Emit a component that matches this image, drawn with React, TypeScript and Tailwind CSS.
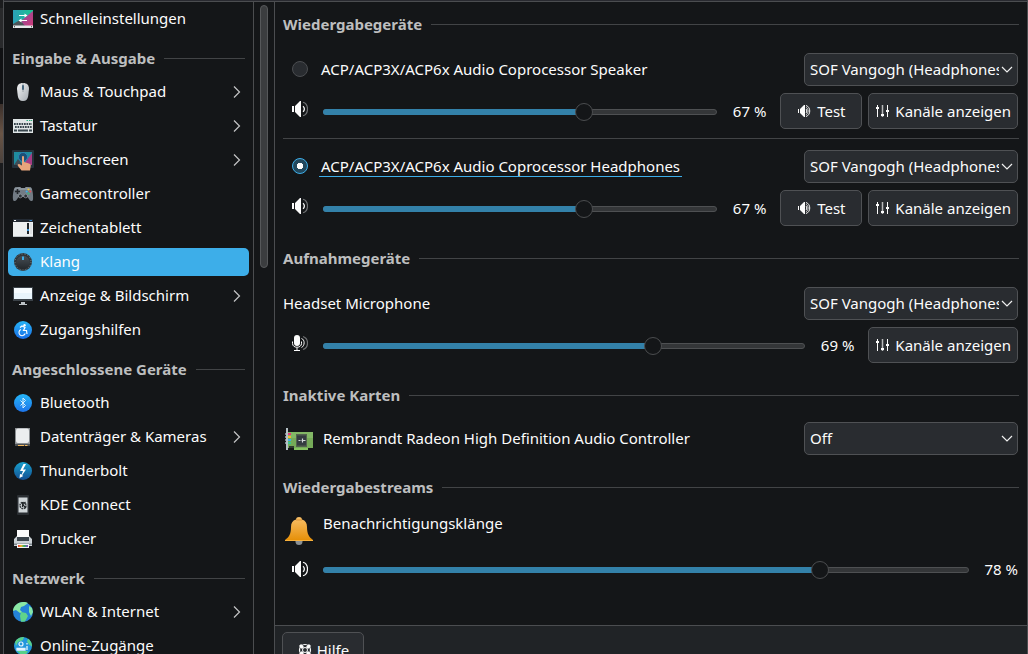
import { useState, type ReactNode } from 'react';

interface NavItem {
  label: string;
  icon: ReactNode;
  more?: boolean;
}

interface NavGroup {
  title?: string;
  items: NavItem[];
}

const Svg = ({ children }: { children: ReactNode }) => (
  <svg viewBox="0 0 22 22" className="size-[22px] shrink-0" aria-hidden="true">
    {children}
  </svg>
);

const QuickIcon = () => (
  <Svg>
    <defs>
      <linearGradient id="quick" x1="0" y1="0" x2="1" y2="0">
        <stop offset="0" stopColor="#2aa0b8" />
        <stop offset="1" stopColor="#1cc28f" />
      </linearGradient>
      <linearGradient id="quick-pink" x1="0" y1="0" x2="1" y2="1">
        <stop offset="0" stopColor="#8a4fa0" />
        <stop offset="1" stopColor="#cf3a78" />
      </linearGradient>
    </defs>
    <path d="M1 2h20v16H1z" fill="url(#quick)" />
    <path d="M21 3v15H12l-3-5z" fill="url(#quick-pink)" />
    <path d="M1 18v-2l7-4 5 6z" fill="#4b5357" />
    <path d="M1 17.500h20V20H1z" fill="#e6e9ea" />
    <path d="M2 18.300h1v1H2zM19 18.300h1v1h-1z" fill="#333" />
    <path d="M7 7.500h7M8 12.500h7" stroke="#fff" strokeWidth="1.200" />
    <path d="M12.500 5.500 15.500 7.500l-3 2zM9.500 10.500l-3 2 3 2z" fill="#fff" />
  </Svg>
);

const MouseIcon = () => (
  <Svg>
    <defs>
      <linearGradient id="mouse" x1="0" y1="0" x2="1" y2="1">
        <stop offset="0" stopColor="#f4f5f6" />
        <stop offset="1" stopColor="#a5abb1" />
      </linearGradient>
    </defs>
    <path d="M5 8c0-4 2-6 6-6s6 2 6 6l-.8 7c-.4 3-2 5-5.200 5s-4.800-2-5.200-5z" fill="url(#mouse)" />
    <path d="M11 2v9" stroke="#8c949b" strokeWidth=".8" />
    <rect x="10" y="4" width="2" height="5" rx="1" fill="#45657c" />
  </Svg>
);

const KeyboardIcon = () => (
  <Svg>
    <path d="M1 4h20v14H1z" fill="#dfe5e6" />
    <path d="M14.500 5h1.500v1h-1.500zM17 5h1.500v1H17zM19 5h1.200v1H19z" fill="#2fae7d" />
    <path d="M2 9h18M3 12h17" stroke="#39464d" strokeWidth="2" strokeDasharray="1.700 .8" />
    <path d="M2 15.500h3m1 0h10m1 0h3" stroke="#39464d" strokeWidth="1.800" />
  </Svg>
);

const TouchIcon = () => (
  <Svg>
    <rect x="0" y="1" width="22" height="18" rx="1" fill="#26323c" />
    <path d="M2 3h18v13H2z" fill="#1f8ca0" />
    <path d="M20 4v12h-9z" fill="#a53c84" />
    <path d="M2 16h9l-5-6z" fill="#404d56" />
    <circle cx="11" cy="8" r="4.500" fill="#1b4f78" stroke="#2b83b4" />
    <path d="M10 8c0-1.500 2-1.500 2 0v5l5 1.500c1.500.5 2 1.500 1.700 2.800L18 21.500H9.500L6 17c-1-1.500.5-2.500 2-1.500l2 1z" fill="#e8a57c" />
  </Svg>
);

const GamepadIcon = () => (
  <Svg>
    <path d="M3 4.500 8 4l1 1h4l1-1 5 .5c1.500 1 2.500 8 2 12-.3 2-2.500 2-3.500.5L15.500 14h-9L4.500 17c-1 1.500-3.200 1.500-3.500-.5-.5-4 .5-11 2-12z" fill="#727b84" />
    <path d="M3 4.500 8 4l1 1h4l1-1 5 .5 1 2.500H2z" fill="#8b949c" />
    <path d="M5.500 6v5M3 8.500h5" stroke="#23272b" strokeWidth="1.600" />
    <circle cx="16.500" cy="6.500" r="1.100" fill="#e6c13c" />
    <circle cx="14.700" cy="8.500" r="1.100" fill="#3daee9" />
    <circle cx="18.300" cy="8.500" r="1.100" fill="#e0555f" />
    <circle cx="16.500" cy="10.500" r="1.100" fill="#3cb878" />
    <circle cx="8.300" cy="13" r="1.900" fill="#2e3439" stroke="#a6adb2" strokeWidth=".6" />
    <circle cx="13.700" cy="13" r="1.900" fill="#2e3439" stroke="#a6adb2" strokeWidth=".6" />
  </Svg>
);

const TabletIcon = () => (
  <Svg>
    <path d="M1 4h20v16H1z" fill="#eceff0" />
    <path d="M1 2h20v3H1z" fill="#232a33" />
    <path d="M2 3h2v1H2z" fill="#fff" />
    <path d="M17.500 3h2.500v1h-2.500z" fill="#2f83c9" />
    <path d="M1 19h20v1H1z" fill="#bfc5c8" />
    <path d="M15 6h2v11h-2z" fill="#20262b" />
    <path d="M15 12h2v2h-2z" fill="#3992d6" />
    <path d="M18.500 6h1v11h-1z" fill="#cfd4d6" />
  </Svg>
);

const SoundIcon = () => (
  <Svg>
    <defs>
      <linearGradient id="knob" x1="0" y1="0" x2="0" y2="1">
        <stop offset="0" stopColor="#474f56" />
        <stop offset="1" stopColor="#23282c" />
      </linearGradient>
    </defs>
    <circle cx="11" cy="11" r="9" fill="#2e353a" />
    <circle cx="11" cy="11" r="8" fill="none" stroke="#7b858c" strokeDasharray="1 2" />
    <circle cx="11" cy="11.500" r="6.800" fill="url(#knob)" />
    <path d="M10 5.500h2V9h-2z" fill="#3daee9" />
  </Svg>
);

const DisplayIcon = () => (
  <Svg>
    <path d="M1 2h20v14H1z" fill="#3b4248" />
    <path d="M2 3h18v11H2z" fill="#e9f4fb" />
    <path d="M2 3h18v5H2z" fill="#f6fbfe" />
    <path d="M9 17h4v2H9zM7 19h8v1H7z" fill="#bdc3c7" />
  </Svg>
);

// Round badge shared by a couple of the sidebar icons
const BadgeIcon = ({ id, from, to, children }: { id: string; from: string; to: string; children: ReactNode }) => (
  <Svg>
    <defs>
      <linearGradient id={id} x1="0" y1="0" x2="0" y2="1">
        <stop offset="0" stopColor={from} />
        <stop offset="1" stopColor={to} />
      </linearGradient>
    </defs>
    <circle cx="11" cy="11" r="9" fill={`url(#${id})`} />
    {children}
  </Svg>
);

const AccessIcon = () => (
  <BadgeIcon id="access" from="#27b4f5" to="#1a6fe8">
    <circle cx="12.500" cy="6.300" r="1.200" fill="#fff" />
    <path d="M8 8.500 10 7l3 1.500-1.500 3h3L15 15" fill="none" stroke="#fff" strokeWidth="1.200" />
    <path d="M9 10.500a3.200 3.200 0 1 0 4.200 4" fill="none" stroke="#fff" strokeWidth="1.100" />
  </BadgeIcon>
);

const BluetoothIcon = () => (
  <BadgeIcon id="bt" from="#25b6f8" to="#1d74ea">
    <path d="m8.500 8.500 5 5-2.500 2.500V6l2.500 2.500-5 5" fill="none" stroke="#d8eefc" />
  </BadgeIcon>
);

const ThunderboltIcon = () => (
  <BadgeIcon id="tb" from="#18a0cc" to="#134f93">
    <path d="M11.500 4 8 11h3l-1.300 3.500L8 14l-.5 4 3.800-2-1.200-.8L14 9.500h-3L14 4z" fill="#fff" />
  </BadgeIcon>
);

const DriveIcon = () => (
  <Svg>
    <path d="M3 2h15v18H3z" fill="#8b8f92" />
    <rect x="4" y="2.500" width="13" height="14.500" rx="2" fill="#eceeef" />
    <path d="M3 18h15v2H3z" fill="#4c5053" />
    <path d="M6 19.500h6M13 19.500h2.500" stroke="#f5b95d" />
  </Svg>
);

const ConnectIcon = () => (
  <Svg>
    <rect x="5" y="1" width="12" height="20" rx="1" fill="#2a2e32" />
    <path d="M6.500 3.500h9v15h-9z" fill="#cfd5d8" />
    <circle cx="11" cy="11.500" r="3" fill="none" stroke="#33383c" strokeWidth="1.500" strokeDasharray="1.600 .7" />
    <path d="M10.500 8v5m0-2 3-3m-2.500 3 3 3" stroke="#22272a" strokeWidth="1.100" />
  </Svg>
);

const PrinterIcon = () => (
  <Svg>
    <defs>
      <linearGradient id="ink" x1="0" y1="0" x2="1" y2="0">
        <stop offset="0" stopColor="#e23a3a" />
        <stop offset=".3" stopColor="#f3b32b" />
        <stop offset=".6" stopColor="#35b45a" />
        <stop offset="1" stopColor="#8548c9" />
      </linearGradient>
    </defs>
    <path d="M5 2h12v8H5z" fill="#fbfbfb" />
    <path d="M2 11l3-3v5h12V8l3 3v7H2z" fill="#cbd1d5" />
    <path d="M5 9h12v4H5z" fill="#3c454c" />
    <path d="M2 15.500h18V17H2z" fill="#7d868d" />
    <path d="M5 16h12v4H5z" fill="#f3f4f5" />
    <path d="M6 17h10v2H6z" fill="url(#ink)" />
  </Svg>
);

const GlobeIcon = () => (
  <Svg>
    <circle cx="11" cy="11" r="10" fill="#2483d8" />
    <path d="M1 10C1 5 6 1 11 1c3 0 4 .5 5 1l-4 3-3 1-1 3 2 2-2 1-4-3z" fill="#8be8a4" />
    <path d="M9 11l5 1 2 3-3 5.500-4 .3-1-5.800z" fill="#5fd38a" />
    <path d="M17 5l3 2 1 4-2 4-2-4z" fill="#84e6a6" />
  </Svg>
);

const OnlineIcon = () => (
  <Svg>
    <circle cx="11" cy="11" r="9" fill="#2196dc" />
    <path d="M3 7c2-4 6-5 9-5l-1 3-5 2-2 4zM16 3.500c3 2 4 5 4 8l-3-2-2-3z" fill="#5ad08a" />
    <path d="M5 16h11l-2 3.500-5 .3z" fill="#58cf88" />
    <circle cx="9" cy="9" r="2" fill="none" stroke="#e3f4fd" strokeWidth="1.200" />
    <path d="M5 15v-1.500h8V15zM15 8v1.500m0 1.500v4" fill="none" stroke="#e3f4fd" strokeWidth="1.300" />
  </Svg>
);

const CardIcon = () => (
  <svg viewBox="0 0 32 32" className="size-8 shrink-0" aria-hidden="true">
    <path d="M5 9h25v16H5z" fill="#75aa58" />
    <path d="M5 9h25v6H5z" fill="#82b765" />
    <path d="M11 25h14v2H11z" fill="#86c262" />
    <path d="M6 23h5v2H6z" fill="#2f3a2f" />
    <path d="M13 11h11v13H13z" fill="#53614f" />
    <path d="M14 12.500h9v10h-9z" fill="#343c40" />
    <path d="M15.500 17.500h2m2-2v4m-1-2h4" stroke="#d5dadb" strokeWidth="1.200" />
    <path d="M5 10h3v2H5z" fill="#e6387b" />
    <path d="M5 13h3v2H5z" fill="#f2b92e" />
    <path d="M5 16h3v2H5z" fill="#3daee9" />
    <path d="M5 19h3v2H5z" fill="#38c58e" />
    <path d="M3 5h2v22H3z" fill="#b4c0c5" />
    <path d="M2.500 10v2m0 1v2m0 1v2m0 1v2" stroke="#7d878c" />
  </svg>
);

const BellIcon = () => (
  <svg viewBox="0 0 32 32" className="mt-[2px] size-8 shrink-0" aria-hidden="true">
    <defs>
      <linearGradient id="bell" x1="0" y1="0" x2="0" y2="1">
        <stop offset="0" stopColor="#f9c069" />
        <stop offset="1" stopColor="#e58e05" />
      </linearGradient>
    </defs>
    <circle cx="16" cy="26.500" r="3.500" fill="#8a9094" />
    <path d="M13 4.500c0-3.300 6-3.300 6 0 3.500 1 5 3.500 5 7.500 0 7 2 10 6 13v1H2v-1c4-3 6-6 6-13 0-4 1.500-6.500 5-7.500z" fill="url(#bell)" />
    <path d="M2 25h28v1H2z" fill="#f8b13c" />
    <path d="M13 5h6" stroke="#d99336" />
  </svg>
);

const SpeakerIcon = ({ dim = false }: { dim?: boolean }) => (
  <svg viewBox="0 0 16 16" className="size-4 shrink-0" fill="none" aria-hidden="true">
    <path d="M0 5h2v6H0zM3 5l5-5h1v16H8l-5-5z" fill="#fcfcfc" />
    <path d="M11 5.200c1.800 1.200 1.800 4.400 0 5.600" stroke="#fcfcfc" strokeWidth="1.300" />
    <path d="M11 1.200c6 1.800 6 11.800 0 13.600" stroke={dim ? '#707274' : '#fcfcfc'} strokeWidth="1.200" />
  </svg>
);

const TestIcon = () => (
  <svg viewBox="0 0 16 16" className="size-4 shrink-0" fill="none" aria-hidden="true">
    <path d="M1 6h1v4H1zM3 6l4-4h1v12H7l-4-4z" fill="#fcfcfc" />
    <path d="M9 6c1 .8 1 3.200 0 4M9 2.500c5 1.500 5 9.500 0 11" stroke="#fcfcfc" />
    <path d="M9 4.300c2.800 1.200 2.800 6.200 0 7.400" stroke="#cfd0d1" />
  </svg>
);

const ChannelsIcon = () => (
  <svg viewBox="0 0 16 16" className="size-4 shrink-0" aria-hidden="true">
    <path d="M2.500 2v12M12.500 2v12" stroke="#fcfcfc" />
    <path d="M7.500 2v12" stroke="#b9babb" strokeWidth="1.500" />
    <path d="M1 4h3v2H1zM6 11h3v2H6zM11 7h3v2h-3z" fill="#fcfcfc" />
  </svg>
);

const MicIcon = () => (
  <svg viewBox="0 0 16 16" className="size-4 shrink-0" fill="none" aria-hidden="true">
    <rect x="2" y="0" width="6" height="11" rx="3" fill="#fcfcfc" />
    <path d="M.5 6.500v2c0 5 9 5 9 0v-2M5 12.500v3M2 15.500h6" stroke="#fcfcfc" />
    <path d="M9.500 3.500c3.500 1 3.500 7.500 0 9" stroke="#fcfcfc" />
    <path d="M11 1.500c6 2 6 11 0 13" stroke="#707274" strokeWidth="1.200" />
  </svg>
);

const HelpIcon = () => (
  <svg viewBox="0 0 16 16" className="size-4 shrink-0" fill="none" stroke="#fcfcfc" aria-hidden="true">
    <circle cx="8" cy="8" r="5.500" strokeWidth="1.200" />
    <circle cx="8" cy="8" r="2.500" />
    <path d="m3 3 3 3m4 4 3 3m0-10-3 3m-4 4-3 3" strokeWidth="3" />
  </svg>
);

const Chevron = () => (
  <svg viewBox="0 0 8 12" className="ml-auto mr-1 h-3 w-2" fill="none" stroke="#c4c5c6" strokeWidth="1.200" aria-hidden="true">
    <path d="m1 .5 5.500 5.500L1 11.500" />
  </svg>
);

const navGroups: NavGroup[] = [
  { items: [{ label: 'Schnelleinstellungen', icon: <QuickIcon /> }] },
  {
    title: 'Eingabe & Ausgabe',
    items: [
      { label: 'Maus & Touchpad', icon: <MouseIcon />, more: true },
      { label: 'Tastatur', icon: <KeyboardIcon />, more: true },
      { label: 'Touchscreen', icon: <TouchIcon />, more: true },
      { label: 'Gamecontroller', icon: <GamepadIcon /> },
      { label: 'Zeichentablett', icon: <TabletIcon /> },
      { label: 'Klang', icon: <SoundIcon /> },
      { label: 'Anzeige & Bildschirm', icon: <DisplayIcon />, more: true },
      { label: 'Zugangshilfen', icon: <AccessIcon /> },
    ],
  },
  {
    title: 'Angeschlossene Geräte',
    items: [
      { label: 'Bluetooth', icon: <BluetoothIcon /> },
      { label: 'Datenträger & Kameras', icon: <DriveIcon />, more: true },
      { label: 'Thunderbolt', icon: <ThunderboltIcon /> },
      { label: 'KDE Connect', icon: <ConnectIcon /> },
      { label: 'Drucker', icon: <PrinterIcon /> },
    ],
  },
  {
    title: 'Netzwerk',
    items: [
      { label: 'WLAN & Internet', icon: <GlobeIcon />, more: true },
      { label: 'Online-Zugänge', icon: <OnlineIcon /> },
    ],
  },
];

// Text next to an icon or a line sits slightly above the middle
const RowText = ({ children }: { children: ReactNode }) => <span className="pb-[2px]">{children}</span>;

const SectionTitle = ({ children }: { children: ReactNode }) => (
  <h2 className="flex h-[25px] items-center gap-[9px] font-bold text-[#bdbebf] after:h-px after:flex-1 after:bg-[#424446]">
    <RowText>{children}</RowText>
  </h2>
);

function Sidebar() {
  const [active, setActive] = useState('Klang');

  return (
    <nav className="w-[250px] shrink-0 border-r border-[#4b4d4f] px-1">
      {navGroups.map((group, i) => (
        <div key={i}>
          {group.title && (
            <div className="h-[39px] px-1 pt-[10px]">
              <SectionTitle>{group.title}</SectionTitle>
            </div>
          )}
          <ul>
            {group.items.map((item) => (
              <li key={item.label} className="py-[3px]">
                <a
                  href="#"
                  onClick={() => setActive(item.label)}
                  className={`flex h-7 items-center gap-[6px] rounded-[5px] px-1 ${
                    active === item.label ? 'bg-[#3daee9]' : ''
                  }`}
                >
                  {item.icon}
                  <RowText>{item.label}</RowText>
                  {item.more && <Chevron />}
                </a>
              </li>
            ))}
          </ul>
        </div>
      ))}
    </nav>
  );
}

interface VolumeProps {
  label: string;
  initial: number;
  icon: ReactNode;
}

function Volume({ label, initial, icon }: VolumeProps) {
  const [value, setValue] = useState(initial);

  return (
    <>
      <button aria-label={`${label} stummschalten`} className="flex h-8 w-[34px] items-center justify-center self-start">
        {icon}
      </button>
      <div className="ml-[6px] mt-[2px] grid flex-1 items-center">
        <div className="col-start-1 row-start-1 h-[6px] rounded-full border border-[#4e5052] bg-[#343638]" />
        <div className="col-start-1 row-start-1 h-[6px] rounded-l-full bg-[#3381a9]" style={{ width: `${value}%` }} />
        <input
          type="range"
          aria-label={label}
          min="0"
          max="100"
          step="0.1"
          value={value}
          onChange={(e) => setValue(Number(e.target.value))}
          className="col-start-1 row-start-1 h-[18px] w-full appearance-none bg-transparent [&::-webkit-slider-thumb]:size-[18px] [&::-webkit-slider-thumb]:appearance-none [&::-webkit-slider-thumb]:rounded-full [&::-webkit-slider-thumb]:border [&::-webkit-slider-thumb]:border-[#4b4d4f] [&::-webkit-slider-thumb]:bg-[#141618]"
        />
      </div>
      <span className="w-[49px] text-right">{Math.round(value)} %</span>
    </>
  );
}

const ToolButton = ({ icon, children }: { icon: ReactNode; children: ReactNode }) => (
  <button className="flex h-9 min-w-[82px] items-center justify-center gap-1 rounded-[5px] border border-[#4f5154] bg-[#292c30] px-[6px]">
    {icon}
    {children}
  </button>
);

const Dropdown = ({ label, options }: { label: string; options: string[] }) => (
  <div className="relative ml-auto w-[214px] shrink-0">
    <select
      aria-label={label}
      className="h-[33px] w-full appearance-none rounded-[5px] border border-[#4f5154] bg-[#292c30] pb-[2px] pl-[5px] pr-[18px]"
    >
      {options.map((option) => (
        <option key={option}>{option}</option>
      ))}
    </select>
    <svg
      viewBox="0 0 12 8"
      className="pointer-events-none absolute right-[5px] top-[13px] h-2 w-3"
      fill="none"
      stroke="#f0f0f0"
      strokeWidth="1.200"
      aria-hidden="true"
    >
      <path d="m1 1 5 5 5-5" />
    </svg>
  </div>
);

const profiles = ['SOF Vangogh (Headphones)', 'SOF Vangogh (Speaker)'];

interface OutputProps {
  name: string;
  checked: boolean;
  onSelect: () => void;
}

const OutputDevice = ({ name, checked, onSelect }: OutputProps) => (
  <div className="pr-px">
    <div className="flex items-center">
      <label className="flex items-center gap-[11px] pl-[9px]">
        <input
          type="radio"
          name="output"
          checked={checked}
          onChange={onSelect}
          className="mb-[2px] size-4 appearance-none rounded-full border border-[#4b4d50] bg-[#292c30] checked:border-[#3daee9] checked:bg-[radial-gradient(circle,#fcfcfc_3px,#22485d_3.5px)]"
        />
        <span className={`border-b px-[2px] leading-5 ${checked ? 'border-[#3daee9]' : 'border-transparent'}`}>{name}</span>
      </label>
      <Dropdown label={`Profil für ${name}`} options={profiles} />
    </div>
    <div className="mt-[7px] flex h-9 items-center">
      <Volume label={name} initial={67} icon={<SpeakerIcon dim />} />
      <div className="ml-[14px] flex gap-[6px]">
        <ToolButton icon={<TestIcon />}>Test</ToolButton>
        <ToolButton icon={<ChannelsIcon />}>Kanäle anzeigen</ToolButton>
      </div>
    </div>
  </div>
);

// Sliver of the window that lies behind this one
const Backdrop = () => (
  <div className="w-[3px] shrink-0 bg-[#1b1c1e]" aria-hidden="true">
    <div className="mt-2 h-10 bg-[#28292b]" />
    <div className="h-14 bg-[#101113]" />
    <div className="h-[59px] bg-linear-to-b from-[#3b302b] via-[#6a5546] to-[#4b423d]" />
  </div>
);

export default function App() {
  const [output, setOutput] = useState('ACP/ACP3X/ACP6x Audio Coprocessor Headphones');

  return (
    <div className="flex h-screen overflow-hidden bg-[#1b1c1e] font-['Noto_Sans',sans-serif] text-[15px] leading-5 text-[#fcfcfc]">
      <Backdrop />
      <div className="flex h-fit min-h-full min-w-0 flex-1 border-x border-[#4b4d50] bg-[#292a30] pt-px">
        <div className="flex min-w-0 flex-1 border-t border-[#4b4d50] bg-[#141618]">
          <Sidebar />
          <div className="w-[21px] shrink-0 border-r border-[#4b4d50] pl-[6px] pt-[3px]">
            <div className="h-[263px] w-2 rounded-full border border-[#56585a] bg-[#3b3d3f]" />
          </div>

          <main className="flex min-w-0 flex-1 flex-col">
            <div className="px-2 pb-10 pt-[10px]">
              <SectionTitle>Wiedergabegeräte</SectionTitle>
              <div className="mt-4">
                <OutputDevice
                  name="ACP/ACP3X/ACP6x Audio Coprocessor Speaker"
                  checked={output.endsWith('Speaker')}
                  onSelect={() => setOutput('ACP/ACP3X/ACP6x Audio Coprocessor Speaker')}
                />
                <hr className="mb-[11px] mt-[9px] border-[#424446]" />
                <OutputDevice
                  name="ACP/ACP3X/ACP6x Audio Coprocessor Headphones"
                  checked={output.endsWith('Headphones')}
                  onSelect={() => setOutput('ACP/ACP3X/ACP6x Audio Coprocessor Headphones')}
                />
              </div>

              <div className="mt-5">
                <SectionTitle>Aufnahmegeräte</SectionTitle>
                <div className="mt-4 flex items-center pr-px">
                  <RowText>Headset Microphone</RowText>
                  <Dropdown label="Profil für Headset Microphone" options={profiles} />
                </div>
                <div className="mt-[7px] flex h-9 items-center pr-px">
                  <Volume label="Headset Microphone" initial={69.2} icon={<MicIcon />} />
                  <div className="ml-[14px]">
                    <ToolButton icon={<ChannelsIcon />}>Kanäle anzeigen</ToolButton>
                  </div>
                </div>
              </div>

              <div className="mt-5">
                <SectionTitle>Inaktive Karten</SectionTitle>
                <div className="mt-[14px] flex items-center gap-2 pr-px">
                  <CardIcon />
                  <RowText>Rembrandt Radeon High Definition Audio Controller</RowText>
                  <Dropdown label="Profil für Rembrandt Radeon" options={['Off', 'Digital Stereo (HDMI)']} />
                </div>
              </div>

              <div className="mt-5">
                <SectionTitle>Wiedergabestreams</SectionTitle>
                <div className="mt-[13px] flex items-start gap-2">
                  <BellIcon />
                  <RowText>Benachrichtigungsklänge</RowText>
                </div>
                <div className="mt-[6px] flex h-8 items-center pr-px">
                  <Volume label="Benachrichtigungsklänge" initial={77.7} icon={<SpeakerIcon />} />
                </div>
              </div>
            </div>

            <footer className="flex-1 border-t border-[#4b4d50] bg-[#202326] px-[7px] py-[6px]">
              <ToolButton icon={<HelpIcon />}>Hilfe</ToolButton>
            </footer>
          </main>
        </div>
      </div>
    </div>
  );
}
